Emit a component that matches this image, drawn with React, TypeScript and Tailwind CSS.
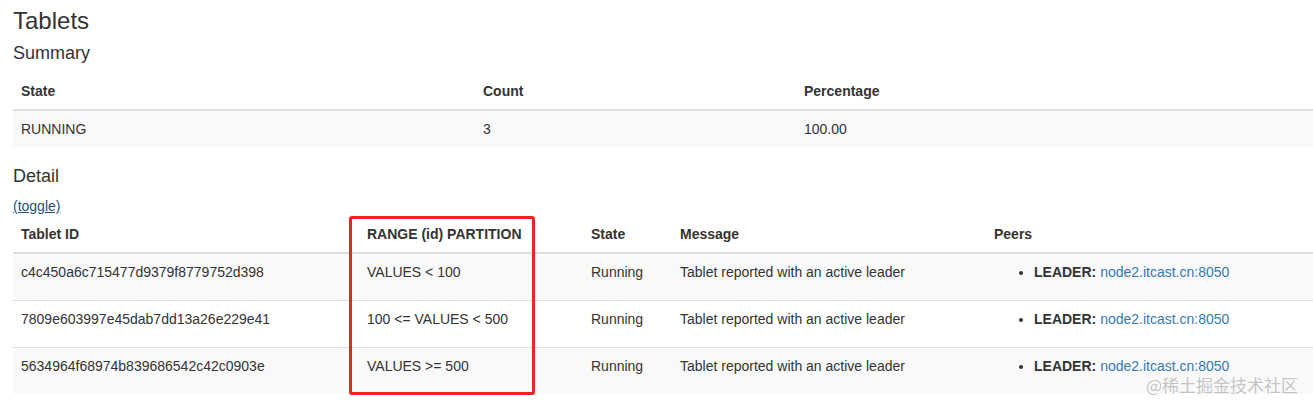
import React from "react";

const detailRows = [
  { id: "c4c450a6c715477d9379f8779752d398", range: "VALUES < 100" },
  { id: "7809e603997e45dab7dd13a26e229e41", range: "100 <= VALUES < 500" },
  { id: "5634964f68974b839686542c42c0903e", range: "VALUES >= 500" },
];

export default function App() {
  return (
    <div
      className="relative min-h-[408px] bg-white pl-[13px] text-[14px] leading-[20px] text-[#333333]"
      style={{ fontFamily: '"Liberation Sans", Arial, Helvetica, sans-serif' }}
    >
      <h3 className="pt-[8px] text-[24px] leading-[26.4px] font-normal">Tablets</h3>
      <h4 className="mt-[10px] mb-[9px] text-[18px] leading-[19.8px] font-normal">Summary</h4>
      <table className="w-[1300px] table-fixed border-collapse">
        <colgroup>
          <col className="w-[462px]" />
          <col className="w-[321px]" />
          <col />
        </colgroup>
        <thead>
          <tr>
            <th className="p-[8px] text-left font-bold border-b-2 border-[#dddddd]">State</th>
            <th className="p-[8px] text-left font-bold border-b-2 border-[#dddddd]">Count</th>
            <th className="p-[8px] text-left font-bold border-b-2 border-[#dddddd]">Percentage</th>
          </tr>
        </thead>
        <tbody>
          <tr className="bg-[#f9f9f9]">
            <td className="p-[8px] align-top">RUNNING</td>
            <td className="p-[8px] align-top">3</td>
            <td className="p-[8px] align-top">100.00</td>
          </tr>
        </tbody>
      </table>
      <h4 className="mt-[20px] mb-[9px] text-[18px] leading-[19.8px] font-normal">Detail</h4>
      <div>
        <a href="#" className="text-[#23527c] underline">(toggle)</a>
      </div>
      <table className="w-[1300px] table-fixed border-collapse">
        <colgroup>
          <col className="w-[346px]" />
          <col className="w-[224px]" />
          <col className="w-[89px]" />
          <col className="w-[314px]" />
          <col />
        </colgroup>
        <thead>
          <tr>
            <th className="p-[8px] text-left font-bold border-b-2 border-[#dddddd]">Tablet ID</th>
            <th className="p-[8px] text-left font-bold border-b-2 border-[#dddddd]">RANGE (id) PARTITION</th>
            <th className="p-[8px] text-left font-bold border-b-2 border-[#dddddd]">State</th>
            <th className="p-[8px] text-left font-bold border-b-2 border-[#dddddd]">Message</th>
            <th className="p-[8px] text-left font-bold border-b-2 border-[#dddddd]">Peers</th>
          </tr>
        </thead>
        <tbody>
          {detailRows.map((r, i) => (
            <tr key={r.id} className={i % 2 === 0 ? "bg-[#f9f9f9]" : "bg-white"}>
              <td className="p-[8px] align-top border-t border-[#dddddd]">{r.id}</td>
              <td className="p-[8px] align-top border-t border-[#dddddd]">{r.range}</td>
              <td className="p-[8px] align-top border-t border-[#dddddd]">Running</td>
              <td className="p-[8px] align-top border-t border-[#dddddd]">Tablet reported with an active leader</td>
              <td className="p-[8px] align-top border-t border-[#dddddd]">
                <ul className="list-disc pl-[40px] mb-[10px]">
                  <li>
                    <b>LEADER:</b>{" "}
                    <a href="#" className="text-[#337ab7]">node2.itcast.cn:8050</a>
                  </li>
                </ul>
              </td>
            </tr>
          ))}
        </tbody>
      </table>

      <div className="pointer-events-none absolute left-[349px] top-[216px] h-[179px] w-[186px] rounded-[3px] border-[3px] border-[#e8261f]" />

      <div
        className="pointer-events-none absolute right-[15px] top-[373px] text-[17px] leading-[24px] text-[#c4c4c4]"
        style={{ fontFamily: '"Noto Sans CJK SC", "Liberation Sans", sans-serif', textShadow: "0 0 2px #ffffff, 0 0 2px #ffffff" }}
      >
        @稀土掘金技术社区
      </div>
    </div>
  );
}
